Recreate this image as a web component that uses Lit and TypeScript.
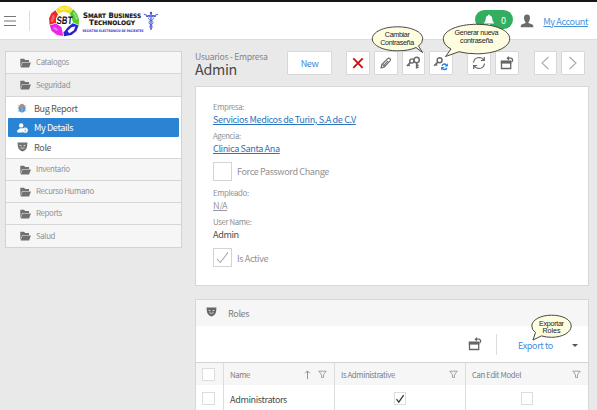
import { LitElement, html, svg, css } from "lit";
import { customElement, property } from "lit/decorators.js";

const icons: Record<string, [number, number, any]> = {
  folder: [11, 10, svg`<path fill="currentColor" d="M.3 9V.8h3.800l1 1.300h3.900v1.900H2.200L.6 8.600zM2.600 4.600h8.300L9.100 9.500H.6z"/>`],
  bug: [10, 10, svg`<path stroke="#8794a5" stroke-width=".8" d="M.8 2.400l8.400 5.800M.8 5.200h8.400M.8 8.400L9.200 2.600"/><ellipse cx="5" cy="5.600" rx="3.300" ry="3.900" fill="#5b94d3"/><path fill="#c88d54" d="M2.300 3.400C2.600 0 7.400 0 7.700 3.400z"/><path stroke="#b9d3ee" stroke-width=".6" d="M5 3.800v5"/>`],
  user: [11, 10, svg`<circle cx="4.200" cy="2.400" r="2.200" fill="currentColor"/><path fill="currentColor" d="M.2 9.400V7.400L3 5.200h2.600l1 .7-.9 1.300.2 2.200z"/><circle cx="8.200" cy="7.200" r="2.600" fill="currentColor"/><path stroke="#2b84d3" stroke-width=".8" d="M8.200 5.600v.8M8.200 7v1.700"/>`],
  mask: [11, 10, svg`<path fill="currentColor" d="M.5.500h10L10 5Q9.200 8.200 5.500 9.400 1.800 8.200 1 5z"/><path d="M2.600 3.300l1.900.5M8.400 3.300l-1.900.5" stroke="#fff" stroke-width=".8"/><path d="M3.400 5.800q2.100.9 4.200 0" fill="none" stroke="#fff" stroke-width=".7"/>`],
  person: [14, 14, svg`<path fill="currentColor" d="M4 3.800C4 1.500 5.100.4 7 .4s3 1.100 3 3.400-1 4-1.600 4.500v.8l4 1.300q1 .5 1 2.900H.6q0-2.400 1-2.900l4-1.300v-.8C5 7.800 4 6.100 4 3.800z"/>`],
  bell: [12, 12, svg`<path fill="currentColor" d="M6 .5q.9 0 .9 1 2.400.6 2.400 3.300 0 3 1.700 4.200v.6H1V9q1.700-1.200 1.700-4.200 0-2.700 2.400-3.300 0-1 .9-1zM4.600 10.200h2.800Q7.200 11.600 6 11.600T4.600 10.200z"/>`],
  cross: [12, 12, svg`<path d="M1.300 1.300l9.400 9.600M10.700 1.300l-9.400 9.600" stroke="#c91414" stroke-width="1.900"/>`],
  pencil: [14, 14, svg`<g fill="none" stroke="currentColor" stroke-width="1.100" stroke-linejoin="round"><path d="M2 12l.9-3.500L8.700 2.700q1.200-1.100 2.300 0t0 2.300L5.300 11z"/><path d="M3.500 8.500l2 2M5 9.200l4.300-4.400"/></g>`],
  keys: [15, 14, svg`<g fill="none" stroke="currentColor"><circle cx="5.900" cy="5" r="2.100" stroke-width="1.400"/><path stroke-width="1.600" d="M4.300 6.600L.9 10M2.500 8.700l1.200 1.200"/><circle cx="10.600" cy="4" r="2.700" stroke-width="1.400"/><path stroke-width="1.500" d="M10.600 6.500v6M10.900 9.200h1.700M10.900 11.300h1.700"/></g>`],
  keyReset: [16, 15, svg`<g fill="none" stroke="currentColor"><circle cx="6.600" cy="4.200" r="2.500" stroke-width="1.400"/><path stroke-width="1.600" d="M4.800 6.100L1.100 9.700M2.800 8.200l1.300 1.300"/></g><g fill="none" stroke="#1b80dc" stroke-width="1.400"><path d="M8.900 9.600q2-2.600 4.500-.8M14 12q-2 2.600-4.500.8"/></g><path fill="#1b80dc" d="M14.800 7.200v3.300h-3.300zM8.100 14.400v-3.300h3.300z"/>`],
  refresh: [14, 14, svg`<path fill="none" stroke="currentColor" stroke-width="1.200" d="M1.500 6.500Q2.200 1.700 7 1.500q3.200 0 4.900 2.700M12.500 7.500Q11.800 12.300 7 12.500q-3.200 0-4.900-2.700M12.300 1v3.500H8.800M1.700 13V9.500h3.500"/>`],
  windowReset: [14, 14, svg`<path fill="none" stroke="currentColor" stroke-width="1.300" d="M1.500 5.500h9.200v7H1.500z"/><path fill="currentColor" d="M.8 4.600h10.600v3H.8z"/><path fill="none" stroke="currentColor" stroke-width="1.200" d="M8 2.200h2.800q2 .4 1.800 2.300-.1 1-1 1.300"/><path fill="currentColor" d="M9 0v4.400L6.400 2.200z"/>`],
  prev: [12, 16, svg`<path fill="none" stroke="#aaa" stroke-width="1.100" d="M9.500 2L3 8l6.500 6"/>`],
  next: [12, 16, svg`<path fill="none" stroke="#aaa" stroke-width="1.100" d="M2.500 2L9 8l-6.500 6"/>`],
  filter: [9, 9, svg`<path fill="none" stroke="#999" stroke-width=".9" d="M.8 1.200h7.400L5.500 4.700v2.800l-2-.1V4.700z"/>`],
  sort: [7, 10, svg`<path fill="none" stroke="#888" stroke-width=".9" d="M3.500 9.200V1M1.200 3.300l2.300-2.400 2.300 2.400"/>`],
  check: [13, 13, svg`<path fill="none" stroke="currentColor" stroke-width="1.100" d="M1 7.800l3.400 3.700L12 1.300"/>`],
  smallCheck: [10, 10, svg`<path fill="none" stroke="#333" stroke-width="1.200" d="M1.500 5.200l2.300 3L8.600 1.200"/>`],
  menu: [12, 12, svg`<path stroke="#777" stroke-width="1" d="M0 1.500h12M0 6h12M0 10.500h12"/>`],
};

@customElement("ui-icon")
class UiIcon extends LitElement {
  @property() name = "";
  static styles = css`:host { display: inline-flex; flex: none; } svg { display: block; }`;
  render() {
    const [w, h, body] = icons[this.name];
    return html`<svg width=${w} height=${h} viewBox="0 0 ${w} ${h}">${body}</svg>`;
  }
}

@customElement("brand-logo")
class BrandLogo extends LitElement {
  static styles = css`
    :host { display: block; height: 34px; }
    svg { display: block; }
    .name { font: bold 7.500px "DejaVu Sans", sans-serif; letter-spacing: 0; fill: #151515; stroke: #151515; stroke-width: .15px; }
    .sc { font-size: 6.200px; }
    .sub { font: bold 3.400px "DejaVu Sans", sans-serif; letter-spacing: 0; fill: #3434cf; }
    .mark { font: bold 10px "Liberation Sans", sans-serif; letter-spacing: 0; fill: #111; }
    .arc { font: bold 3.200px "Liberation Sans", sans-serif; letter-spacing: 0; fill: #fff; opacity: .6; }
  `;
  render() {
    return html`<svg width="112" height="34" viewBox="0 0 112 34">
      <path fill="#f1df26" d="M7 6.500L11 3.500 15.500 2.500 21 3.700 23.500 6 20.500 10.500 15 8.500 9.500 10.500z"/>
      <path fill="#59c92d" d="M24.200 6.300l3.800 4.200 2 5.500-.2 6-5.800-2.500-1.500-5.500-2-3.200z"/>
      <path fill="#2524cc" d="M29.600 22.600L27.500 28l-5 4-7.500 1.200-.5-3.700 4.500-5.500 4.700-3.800z"/>
      <path fill="#fff" d="M18.500 28l4.300-4 3.700-.5-1.800 4-4.500 2.700z"/>
      <path fill="#e927e5" d="M.7 22.500L7 20.500l5.500 3.700 1.700 8.800-6-1-5.500-4z"/>
      <path fill="#ee2828" d="M6.300 7.200L9 11.200 7 15.500v4.300L.6 21.800 0 15.500 2.200 10.500z"/>
      <text class="arc" x="10" y="7">SALUD</text>
      <text class="arc" transform="translate(4 19) rotate(-72)">RED</text>
      <text class="arc" transform="translate(24 10) rotate(66)">WEB</text>
      <text class="arc" transform="translate(4 25.500) rotate(34)">RH</text>
      <text class="mark" transform="translate(7.300 21) skewX(-6) scale(.78 1.100)">SBT</text>
      <text class="name" x="34" y="15" textLength="58" lengthAdjust="spacingAndGlyphs">S<tspan class="sc">MART</tspan> B<tspan class="sc">USINESS</tspan></text>
      <text class="name" x="40" y="22.300" textLength="46" lengthAdjust="spacingAndGlyphs">T<tspan class="sc">ECHNOLOGY</tspan></text>
      <text class="sub" x="33.500" y="28.500" textLength="61" lengthAdjust="spacingAndGlyphs">REGISTRO ELECTRÓNICO DE PACIENTES</text>
      <g fill="none" stroke="#4550d8" stroke-width="1">
        <path d="M102 9.500V27" stroke-width="1.200"/>
        <path d="M101.500 12.500q-2.500 1-6.500-1.300M102.500 12.500q2.500 1 6.500-1.300M101.500 13.500q-2 .7-4.500-.4M102.500 13.500q2 .7 4.500-.4"/>
        <path stroke-width=".8" d="M99.500 15q0 2 2.500 2.600t2 2.200-2 2.100-1.200 2 1.200 1.500M104.500 15q0 2-2.500 2.600t-2 2.200 2 2.100 1.200 2-1.200 1.500"/>
      </g>
      <circle cx="102" cy="10" r="1.200" fill="#4550d8"/>
    </svg>`;
  }
}

@customElement("app-root")
class AppRoot extends LitElement {
  static styles = css`
    * { box-sizing: border-box; }
    :host { display: block; position: relative; width: 597px; height: 410px; overflow: hidden; background: #e9e9e9; color: #4c4c4c;
      font: 9.100px/14px "Noto Sans CJK SC", "Open Sans", sans-serif; letter-spacing: -.39px; white-space: nowrap; }
    .header { height: 40px; border-top: 2px solid #181518; border-bottom: 1px solid #dcdcdc; background: #fff; display: flex; align-items: center; padding-left: 4px; }
    .rule { width: 1px; height: 20px; margin: 0 19px 0 13px; background: #ddd; }
    .header brand-logo { margin-top: -2px; }
    .account { margin-left: auto; display: flex; align-items: center; padding-right: 9px; }
    .bell { width: 38px; height: 19px; border-radius: 10px; background: #33ae60; color: #fff; display: flex; align-items: center; justify-content: center; gap: 6px; margin: -2px 7px 0 0; }
    .person { color: #6c6c6c; margin-right: 9px; }
    a { text-decoration: underline; text-decoration-thickness: 1px; text-underline-offset: 1px; color: #2b73bd; }
    .account a { color: #4393df; }
    .page { display: flex; padding-left: 5px; gap: 13px; }
    .side { width: 177px; height: 197px; margin-top: 11px; border: 1px solid #d3d3d3; background: #fff; color: #707070; }
    .group { height: 22px; background: #f6f6f6; border-bottom: 1px solid #d6d6d6; display: flex; align-items: center; padding-left: 14px; gap: 5px; font-size: 7.900px; }
    .group span { color: #929292; margin-top: -1px; }
    .open { height: 23px; background: #eee; }
    .group:last-child { border-bottom: 0; }
    .items { height: 62px; padding: 1px 2px 0; border-bottom: 1px solid #d6d6d6; }
    .item { height: 20px; display: flex; align-items: center; padding-left: 9px; gap: 6px; }
    .item span { color: #5c5c5c; }
    .item:first-child ui-icon { margin-right: 1px; }
    .sel { height: 19px; background: #2b84d3; color: #fff; border-radius: 1px; }
    .sel span { color: #fff; margin-top: -1px; }
    .main { width: 394px; }
    .bar { height: 46px; padding-top: 11px; display: flex; }
    .title { width: 93px; color: #858585; font-size: 8.700px; line-height: 12px; letter-spacing: -.3px; }
    .title b { display: block; font-weight: 400; color: #484848; font-size: 14.300px; line-height: 12px; }
    .btn { width: 24px; height: 24px; border: 1px solid #d7d7d7; border-radius: 1px; background: #fff; display: flex; align-items: center; justify-content: center; margin-right: 4px; color: #666; }
    .new { width: 46px; margin-right: 14px; color: #3f86d1; }
    .gap { margin-right: 14px; }
    .gap2 { margin-right: 15px; }
    .card { border: 1px solid #d7d7d7; background: #fff; }
    .form { height: 200px; padding: 14px 0 0 17px; }
    .field { height: 29.300px; }
    .label { font-size: 7.800px; line-height: 12px; color: #929292; }
    .value { line-height: 13px; }
    .value.na a { color: #999; }
    .option { display: flex; align-items: center; height: 19px; gap: 5px; color: #929292; }
    .box { width: 19px; height: 19px; border: 1px solid #d4d4d4; display: flex; align-items: center; justify-content: center; color: #aaa; }
    .first { margin: 2px 0 6px; }
    .last { margin-top: 3px; }
    .roles { margin-top: 13px; height: 112px; border-bottom: 0; }
    .head { height: 26px; background: #f6f6f6; display: flex; align-items: center; padding: 0 0 0 10px; gap: 11px; color: #808080; }
    .head ui-icon { color: #666; margin-top: -2px; }
    .tools { height: 36px; display: flex; align-items: center; justify-content: flex-end; color: #666; }
    .line { width: 1px; height: 21px; background: #ddd; margin: 0 21px 0 14px; }
    .export { color: #3f8de0; margin: 2px 19px 0 0; }
    .caret { border: 3px solid transparent; border-top-color: #555; border-bottom: 0; margin: 2px 10px 0 0; }
    .grid { display: grid; grid-template-columns: 28px 111px 131px 122px; }
    .cell { height: 27px; border-right: 1px solid #ddd; display: flex; align-items: center; padding-left: 6px; }
    .cell:nth-child(4n) { border-right: 0; }
    .th { height: 23px; border-top: 1px solid #d4d4d4; background: #f6f6f6; color: #808080; font-size: 7.800px; padding: 1px 7px 0 6px; justify-content: space-between; }
    .th .pair { display: flex; gap: 7px; }
    .small { width: 12.500px; height: 12.500px; border: 1px solid #ddd; background: #fff; display: flex; align-items: center; justify-content: center; flex: none; }
    .mid { justify-content: center; padding: 0; }
    .tip { position: absolute; left: 0; top: 0; pointer-events: none; }
    .tip text { font: 7.200px "Liberation Sans", Arial, sans-serif; letter-spacing: 0; fill: #222; text-anchor: middle; }
    .tip path { fill: #fffddf; stroke: #333; stroke-width: .9; }
  `;

  group(name: string, open = false) {
    return html`<div class="group ${open ? "open" : ""}"><ui-icon name="folder"></ui-icon><span>${name}</span></div>`;
  }
  item(icon: string, name: string, sel = false) {
    return html`<div class="item ${sel ? "sel" : ""}"><ui-icon name=${icon}></ui-icon><span>${name}</span></div>`;
  }
  btn(icon: string, extra = "") {
    return html`<div class="btn ${extra}"><ui-icon name=${icon}></ui-icon></div>`;
  }
  field(label: string, value: unknown, extra = "") {
    return html`<div class="field"><div class="label">${label}</div><div class="value ${extra}">${value}</div></div>`;
  }

  render() {
    return html`
      <div class="header">
        <ui-icon name="menu"></ui-icon><div class="rule"></div><brand-logo></brand-logo>
        <div class="account">
          <div class="bell"><ui-icon name="bell"></ui-icon><span>0</span></div>
          <ui-icon class="person" name="person"></ui-icon><a>My Account</a>
        </div>
      </div>
      <div class="page">
        <div class="side">
          ${this.group("Catalogos")}${this.group("Seguridad", true)}
          <div class="items">
            ${this.item("bug", "Bug Report")}${this.item("user", "My Details", true)}${this.item("mask", "Role")}
          </div>
          ${["Inventario", "Recurso Humano", "Reports", "Salud"].map((n) => this.group(n))}
        </div>
        <div class="main">
          <div class="bar">
            <div class="title">Usuarios - Empresa<b>Admin</b></div>
            <div class="btn new">New</div>
            ${this.btn("cross")}${this.btn("pencil")}${this.btn("keys")}${this.btn("keyReset", "gap")}
            ${this.btn("refresh")}${this.btn("windowReset", "gap2")}${this.btn("prev")}${this.btn("next")}
          </div>
          <div class="card form">
            ${this.field("Empresa:", html`<a>Servicios Medicos de Turin, S.A de C.V</a>`)}
            ${this.field("Agencia:", html`<a>Clinica Santa Ana</a>`)}
            <div class="option first"><div class="box"></div>Force Password Change</div>
            ${this.field("Empleado:", html`<a>N/A</a>`, "na")}
            ${this.field("User Name:", "Admin")}
            <div class="option last"><div class="box"><ui-icon name="check"></ui-icon></div>Is Active</div>
          </div>
          <div class="card roles">
            <div class="head"><ui-icon name="mask"></ui-icon>Roles</div>
            <div class="tools">
              <ui-icon name="windowReset"></ui-icon><div class="line"></div>
              <div class="export">Export to</div><div class="caret"></div>
            </div>
            <div class="grid">
              <div class="cell th"><div class="small"></div></div>
              <div class="cell th">Name<div class="pair"><ui-icon name="sort"></ui-icon><ui-icon name="filter"></ui-icon></div></div>
              <div class="cell th">Is Administrative<ui-icon name="filter"></ui-icon></div>
              <div class="cell th">Can Edit Model<ui-icon name="filter"></ui-icon></div>
              <div class="cell"><div class="small"></div></div>
              <div class="cell">Administrators</div>
              <div class="cell mid"><div class="small"><ui-icon name="smallCheck"></ui-icon></div></div>
              <div class="cell mid"><div class="small"></div></div>
            </div>
          </div>
        </div>
      </div>
      <svg class="tip" width="597" height="410" viewBox="0 0 597 410">
        <path d="M416 47.500L422.500 52.500 418.500 46Q422.700 43 422.700 38.800C422.700 32 411.500 26.800 397.500 26.800S372.300 32 372.300 38.800 383.500 50.800 397.500 50.800Q409 50.800 416 47.500z"/>
        <text x="397.300" y="37.200" textLength="25">Cambiar</text><text x="397.200" y="45" textLength="34">Contraseña</text>
        <path d="M451 49L445.500 56.500 459 51.700Q467 53.800 476.500 53.800C495 53.800 509.700 47.500 509.700 38.800S495 24.300 476.500 24.300 443.300 30.500 443.300 38.800Q443.300 45 451 49z"/>
        <text x="476.600" y="35.300" textLength="44">Generar nueva</text><text x="476.600" y="43.200" textLength="33">contraseña</text>
        <path d="M535.500 332.500L533 340 541.500 335.900Q546 337.300 551.500 337.300C562.500 337.300 571.200 332.500 571.200 326S562.500 315.200 551.500 315.200 531.800 320 531.800 326Q531.800 330 535.500 332.500z"/>
        <text x="551.500" y="325.600" textLength="25">Exportar</text><text x="551.500" y="333.200" textLength="18">Roles</text>
      </svg>`;
  }
}
